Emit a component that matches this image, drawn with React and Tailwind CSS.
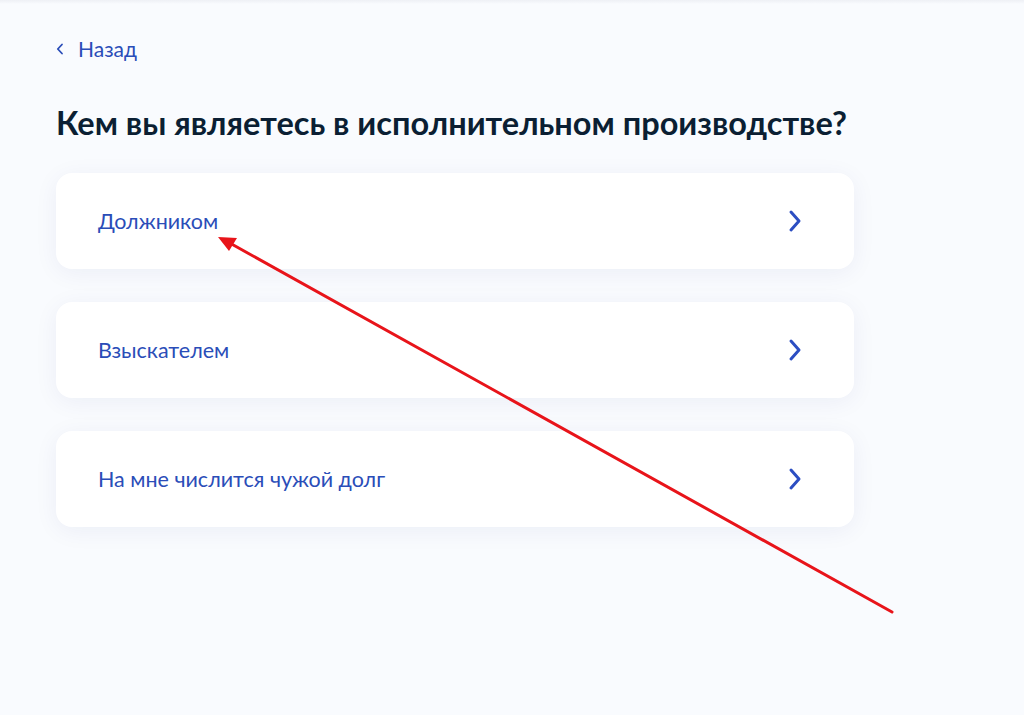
const OPTIONS = ['Должником', 'Взыскателем', 'На мне числится чужой долг'];

function ChevronRight() {
  return (
    <svg width="14" height="24" viewBox="0 0 14 24" fill="none" className="shrink-0">
      <path d="M3 3l8 9-8 9" stroke="#2c4ec2" strokeWidth="3" strokeLinecap="round" strokeLinejoin="round" />
    </svg>
  );
}

export default function App() {
  return (
    <div
      className="relative w-[1024px] h-[715px] overflow-hidden bg-[#f9fbfe]"
      style={{ fontFamily: 'Lato, "Noto Sans", sans-serif' }}
    >
      <div className="h-[4px] bg-gradient-to-b from-[#eef0f5] to-[#f9fbfe]" />

      <div className="pl-[56px] pt-[33px] w-[854px]">
        {/* Back link */}
        <a className="flex items-center gap-[14px] text-[#2a4db8] text-[21px] leading-[24px] cursor-pointer">
          <svg width="8" height="12" viewBox="0 0 8 12" fill="none">
            <path d="M6 1.5L1.8 6 6 10.5" stroke="#2a4db8" strokeWidth="1.8" strokeLinecap="round" strokeLinejoin="round" />
          </svg>
          Назад
        </a>

        <h1 className="mt-[42px] text-[32.5px] leading-[40px] font-bold text-[#0b1f33] whitespace-nowrap">
          Кем вы являетесь в исполнительном производстве?
        </h1>

        <div className="mt-[30px] flex flex-col gap-[33px]">
          {OPTIONS.map((o) => (
            <button
              key={o}
              className="h-[96px] w-full flex items-center justify-between pl-[42px] pr-[52px] bg-white rounded-[16px] shadow-[0_4px_24px_rgba(20,40,120,0.06)] text-left"
            >
              <span className="text-[21.5px] leading-[26px] text-[#2a4db8]">{o}</span>
              <ChevronRight />
            </button>
          ))}
        </div>
      </div>

      {/* Red annotation arrow */}
      <svg className="absolute inset-0 pointer-events-none" width="1024" height="715">
        <line x1="892" y1="612" x2="228" y2="242" stroke="#e8141a" strokeWidth="3" strokeLinecap="round" />
        <polygon points="218,237 237,238 229,251" fill="#e8141a" />
      </svg>
    </div>
  );
}
